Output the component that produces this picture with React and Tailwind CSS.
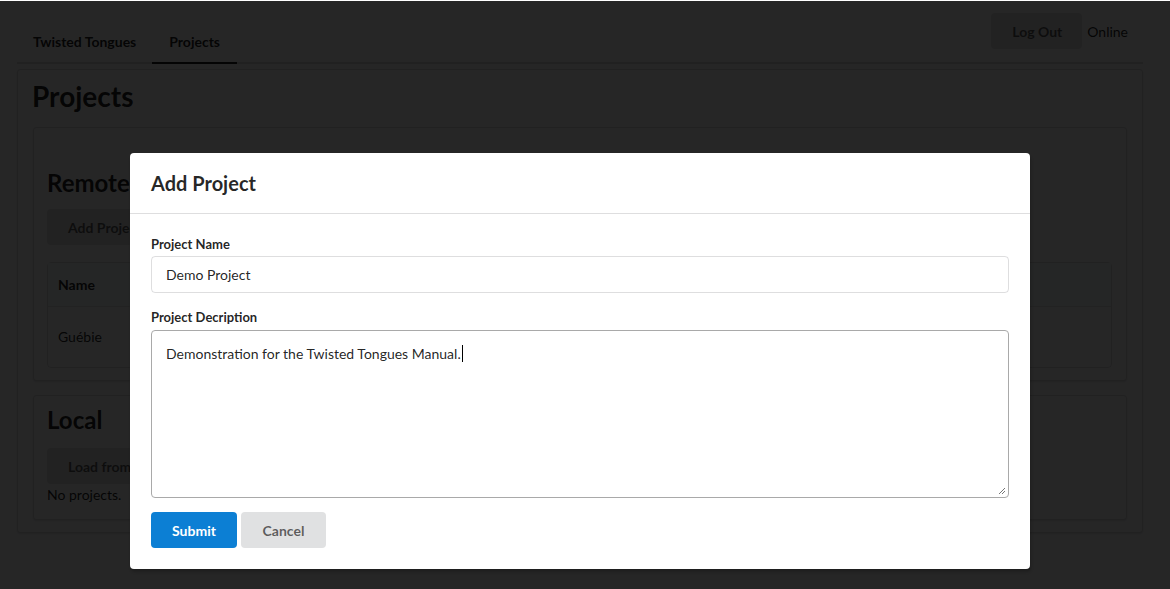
import React from 'react';

const Segment = ({ className = '', children }) => (
  <div className={`rounded-[4px] border border-[rgba(34,36,38,0.15)] shadow-[0_1px_2px_0_rgba(34,36,38,0.15)] bg-white ${className}`}>
    {children}
  </div>
);

const GreyButton = ({ children, className = '' }) => (
  <button className={`h-[36px] whitespace-nowrap rounded-[4px] bg-[#e0e1e2] px-[21px] text-[14px] font-bold text-[rgba(0,0,0,0.6)] ${className}`}>
    {children}
  </button>
);

const Page = () => (
  <div className="px-[17px] pt-[13px]">
    {/* Top menu */}
    <div className="flex w-[1126px] items-end justify-between border-b-2 border-[rgba(34,36,38,0.15)]">
      <div className="flex items-end">
        <div className="h-[40px] px-[16px] pt-[9px] text-[14px] font-bold">Twisted Tongues</div>
        <div className="-mb-[2px] h-[42px] border-b-2 border-[#1b1c1d] px-[17px] pt-[9px] text-[14px] font-bold">Projects</div>
      </div>
      <div className="mb-[13px] flex items-center gap-[5px] pr-[15px]">
        <GreyButton className="w-[91px] h-[35px] px-0">Log Out</GreyButton>
        <span className="text-[14px]">Online</span>
      </div>
    </div>

    {/* Main container */}
    <Segment className="mt-[5px] w-[1126px] px-[15px] pb-[12px] pt-[6px]">
      <h1 className="-ml-[1px] text-[28px] font-bold leading-[40px]">Projects</h1>

      <Segment className="mt-[11px] pl-[13px] pr-[14px] pb-[12px] pt-[38px]">
        <h2 className="text-[24px] font-bold leading-[34px]">Remote</h2>
        <GreyButton className="mt-[9px]">Add Project</GreyButton>
        <div className="mt-[17px] rounded-[4px] border border-[rgba(34,36,38,0.15)]">
          <div className="h-[44px] border-b border-[rgba(34,36,38,0.1)] bg-[#f9fafb] px-[10px] pt-[11px] text-[14px] font-bold">Name</div>
          <div className="h-[60px] px-[10px] pt-[19px] text-[14px]">Guébie</div>
        </div>
      </Segment>

      <Segment className="mt-[14px] pl-[13px] pr-[14px] pb-[14px] pt-[7px]">
        <h2 className="text-[24px] font-bold leading-[34px]">Local</h2>
        <GreyButton className="mt-[11px]">Load from file</GreyButton>
        <p className="text-[14px]">No projects.</p>
      </Segment>
    </Segment>
  </div>
);

const Modal = () => (
  <div className="absolute left-[130px] top-[153px] w-[900px] rounded-[4px] bg-white shadow-[1px_3px_3px_0_rgba(0,0,0,0.2)]">
    <div className="h-[61px] border-b border-[rgba(34,36,38,0.15)] px-[21px] pt-[16px] text-[20px] font-bold leading-[28px] text-[rgba(0,0,0,0.85)]">
      Add Project
    </div>
    <div className="px-[21px] pb-[21px] pt-[22px]">
      <label className="block text-[13px] font-bold leading-[16px] text-[rgba(0,0,0,0.87)]">Project Name</label>
      <div className="mt-[4px] h-[37px] rounded-[4px] border border-[rgba(34,36,38,0.15)] px-[14px] pt-[9px] text-[14px] leading-[18px]">
        Demo Project
      </div>
      <label className="mt-[16px] block text-[13px] font-bold leading-[16px] text-[rgba(0,0,0,0.87)]">Project Decription</label>
      <div className="relative mt-[5px] h-[168px] rounded-[4px] border border-[#a9a9a9] px-[14px] pt-[11px] text-[14px] leading-[18px]">
        Demonstration for the Twisted Tongues Manual.
        <span className="ml-[1px] inline-block h-[17px] w-px translate-y-[3px] bg-black" />
        <svg className="absolute bottom-[2px] right-[2px]" width="8" height="8" viewBox="0 0 8 8">
          <path d="M1 7 L7 1 M4 7 L7 4" stroke="#777" strokeWidth="1" />
        </svg>
      </div>
      <div className="mt-[14px] flex gap-[4px]">
        <button className="h-[36px] w-[86px] rounded-[4px] bg-[#0c7fd4] text-[14px] font-bold text-white">Submit</button>
        <button className="h-[36px] w-[85px] rounded-[4px] bg-[#e0e1e2] text-[14px] font-bold text-[rgba(0,0,0,0.6)]">Cancel</button>
      </div>
    </div>
  </div>
);

export default function App() {
  return (
    <div className="relative h-[589px] overflow-hidden bg-white font-['Lato','Noto_Sans',sans-serif] text-[rgba(0,0,0,0.87)]">
      <Page />
      <div className="absolute inset-x-0 bottom-0 top-[1px] bg-[rgba(0,0,0,0.85)]" />
      <Modal />
    </div>
  );
}
